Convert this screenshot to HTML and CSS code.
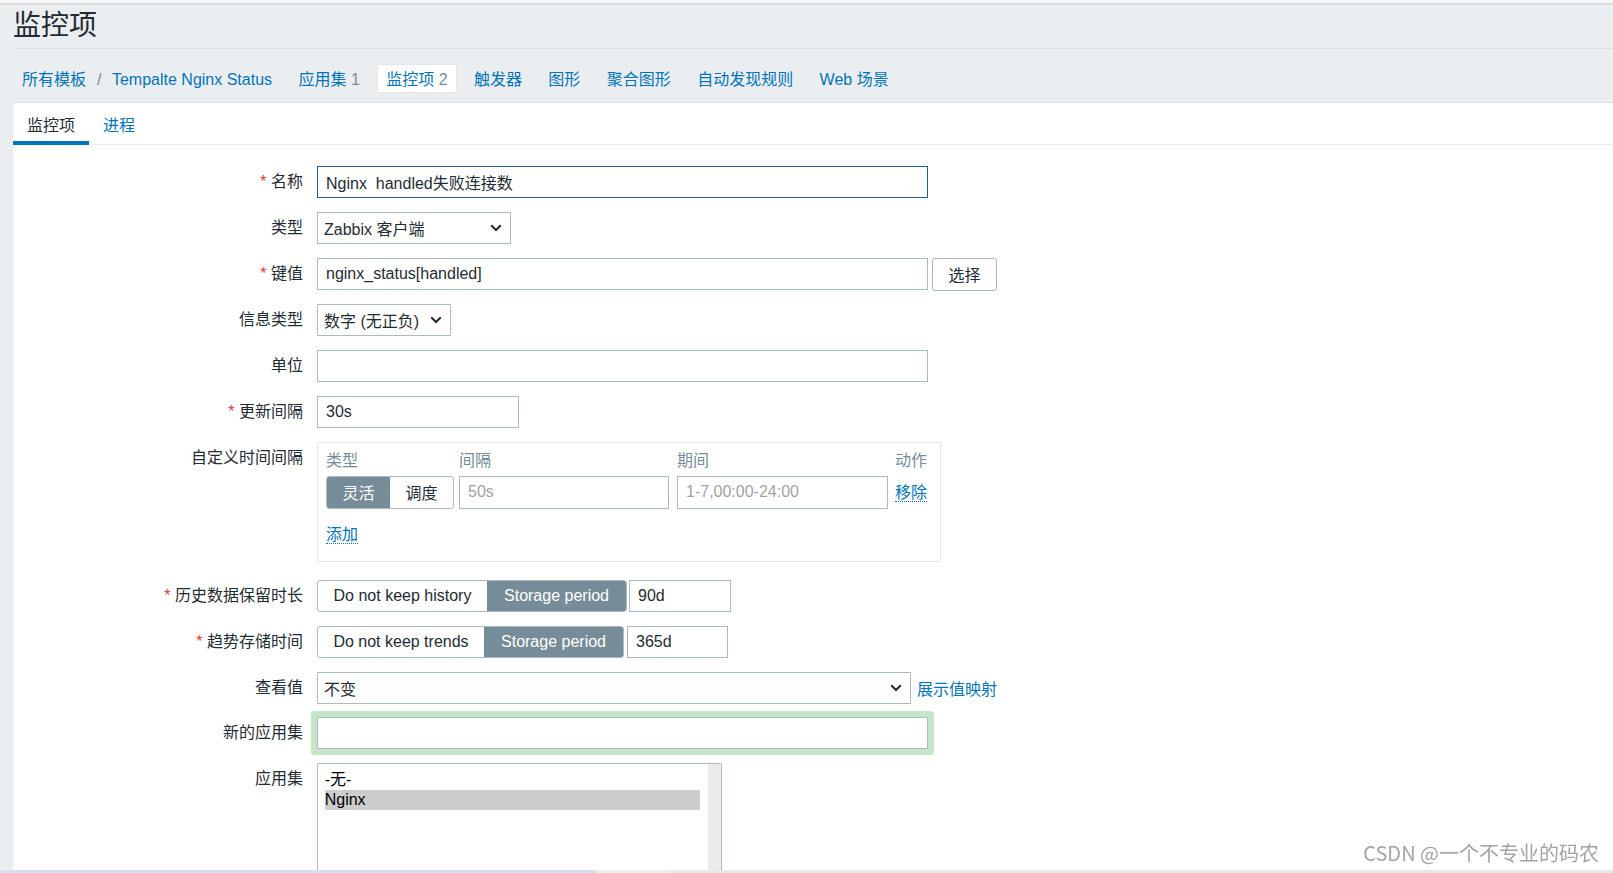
FILE: index.html
```html
<!DOCTYPE html>
<html lang="zh-CN">
<head>
<meta charset="utf-8">
<title>监控项</title>
<link rel="stylesheet" href="styles.css">
</head>
<body>
<div class="topbar"></div>
<header class="header">
  <h1 class="title">监控项</h1>
  <nav class="nav">
    <span class="nav-item"><a class="link">所有模板</a><span class="sep">/</span><a class="link">Tempalte Nginx Status</a></span>
    <a class="nav-item link">应用集 <span class="count">1</span></a>
    <span class="nav-item active"><a class="link">监控项</a> <span class="count">2</span></span>
    <a class="nav-item link">触发器</a>
    <a class="nav-item link">图形</a>
    <a class="nav-item link">聚合图形</a>
    <a class="nav-item link">自动发现规则</a>
    <a class="nav-item link">Web 场景</a>
  </nav>
</header>
<main class="panel">
  <div class="tabs">
    <span class="tab active">监控项</span>
    <span class="tab link">进程</span>
  </div>
  <form class="form">
    <label class="lbl"><span class="req">*</span> 名称</label>
    <div class="field"><input class="input w-611 focus" type="text" value="Nginx  handled失败连接数"></div>

    <label class="lbl">类型</label>
    <div class="field"><div class="select w-194"><span>Zabbix 客户端</span><svg class="chev" width="12" height="8" viewBox="0 0 12 8"><polyline points="1.2,1.2 6,6 10.8,1.2" fill="none" stroke="#1f2c33" stroke-width="2"/></svg></div></div>

    <label class="lbl"><span class="req">*</span> 键值</label>
    <div class="field row"><input class="input w-611" type="text" value="nginx_status[handled]"><button type="button" class="btn">选择</button></div>

    <label class="lbl">信息类型</label>
    <div class="field"><div class="select w-134"><span>数字 (无正负)</span><svg class="chev" width="12" height="8" viewBox="0 0 12 8"><polyline points="1.2,1.2 6,6 10.8,1.2" fill="none" stroke="#1f2c33" stroke-width="2"/></svg></div></div>

    <label class="lbl">单位</label>
    <div class="field"><input class="input w-611" type="text" value=""></div>

    <label class="lbl"><span class="req">*</span> 更新间隔</label>
    <div class="field"><input class="input w-202" type="text" value="30s"></div>

    <label class="lbl">自定义时间间隔</label>
    <div class="field">
      <div class="intervals">
        <div class="iv-grid">
          <span class="iv-head">类型</span>
          <span class="iv-head">间隔</span>
          <span class="iv-head">期间</span>
          <span class="iv-head">动作</span>
          <div class="seg seg-small"><span class="seg-opt on w-64">灵活</span><span class="seg-opt w-64">调度</span></div>
          <input class="input h-33 w-210 muted" type="text" value="50s">
          <input class="input h-33 w-211 muted" type="text" value="1-7,00:00-24:00">
          <span class="iv-action"><a class="link dotted">移除</a></span>
        </div>
        <div class="iv-add"><a class="link dotted">添加</a></div>
      </div>
    </div>

    <label class="lbl"><span class="req">*</span> 历史数据保留时长</label>
    <div class="field row gap-2">
      <div class="seg"><span class="seg-opt w-170">Do not keep history</span><span class="seg-opt on w-139">Storage period</span></div>
      <input class="input w-102" type="text" value="90d">
    </div>

    <label class="lbl"><span class="req">*</span> 趋势存储时间</label>
    <div class="field row gap-3">
      <div class="seg"><span class="seg-opt w-167">Do not keep trends</span><span class="seg-opt on w-139">Storage period</span></div>
      <input class="input w-101" type="text" value="365d">
    </div>

    <label class="lbl">查看值</label>
    <div class="field row gap-6">
      <div class="select w-594"><span>不变</span><svg class="chev" width="12" height="8" viewBox="0 0 12 8"><polyline points="1.2,1.2 6,6 10.8,1.2" fill="none" stroke="#1f2c33" stroke-width="2"/></svg></div>
      <a class="link">展示值映射</a>
    </div>

    <label class="lbl">新的应用集</label>
    <div class="field"><input class="input w-611 highlight" type="text" value=""></div>

    <label class="lbl">应用集</label>
    <div class="field">
      <div class="listbox">
        <div class="options">
          <div class="option">-无-</div>
          <div class="option selected">Nginx</div>
        </div>
        <div class="scrollbar"></div>
      </div>
    </div>
  </form>
</main>
<div class="watermark">CSDN @一个不专业的码农</div>
<div class="bottombar"></div>
</body>
</html>
```
FILE: styles.css
```css
* { box-sizing: border-box; }

html, body {
  margin: 0;
  height: 100%;
  overflow: hidden;
}

body {
  background: #ebeef0;
  font-family: "Liberation Sans", Arial, "Noto Sans CJK SC", sans-serif;
  font-size: 16px;
  color: #1f2c33;
  display: flex;
  flex-direction: column;
}

.topbar {
  flex: none;
  height: 5px;
  background: #f6f6f7;
  border-bottom: 2px solid #d8dbdf;
}

.header {
  flex: none;
  padding-left: 13px;
}

.title {
  margin: 0;
  height: 44px;
  line-height: 42px;
  font-size: 28px;
  font-weight: normal;
  color: #1f2c33;
  border-bottom: 1px solid #dde2e5;
}

.nav {
  display: flex;
  align-items: flex-start;
  gap: 8.4px;
  height: 54px;
  padding-top: 15px;
  border-bottom: 1px solid #dadfe3;
}

.link {
  color: #0275b8;
  text-decoration: none;
  cursor: pointer;
}

.nav-item {
  height: 29px;
  line-height: 25px;
  padding: 2px 8px 0;
  border: 1px solid transparent;
  border-radius: 2px;
  white-space: nowrap;
}

.nav-item.active {
  background: #fff;
  border-color: #e3e7ea;
}

.sep {
  color: #768d99;
  margin: 0 10.5px 0 11px;
}

.count { color: #768d99; }

.panel {
  flex: 1;
  margin-left: 13px;
  background: #fff;
}

.tabs {
  display: flex;
  align-items: flex-start;
  height: 42px;
  border-bottom: 1px solid #ebeef0;
}

.tab {
  height: 42px;
  padding: 8px 14px 0;
  line-height: 30px;
}

.tab.active {
  color: #1f2c33;
  border-bottom: 4px solid #0275b8;
}

.form {
  display: grid;
  grid-template-columns: 290px auto;
  column-gap: 14px;
  row-gap: 13.8px;
  align-items: start;
  justify-content: start;
  padding-top: 21px;
  margin: 0;
}

.lbl {
  text-align: right;
  line-height: 32px;
  white-space: nowrap;
}

.req {
  color: #e33734;
}

.field { min-height: 32px; }

.row {
  display: flex;
  align-items: center;
  gap: 4px;
}
.gap-2 { gap: 2px; }
.gap-3 { gap: 3px; }
.gap-6 { gap: 6px; }

.input {
  display: block;
  height: 32px;
  margin: 0;
  padding: 0 8px;
  border: 1px solid #acbbc2;
  border-radius: 0;
  background: #fff;
  font: inherit;
  font-size: 16px;
  color: #1f2c33;
  outline: none;
}

.input.focus { border-color: #1f5f95; }
.input.muted { color: #a3a3a3; }
.input.h-33 { height: 33px; }
.input.highlight {
  box-shadow: 0 0 0 6px #c7e5c9;
  border-radius: 1px;
}

.w-611 { width: 611px; }
.w-202 { width: 202px; }
.w-210 { width: 210px; }
.w-211 { width: 211px; }
.w-102 { width: 102px; }
.w-101 { width: 101px; }
.w-194 { width: 194px; }
.w-134 { width: 134px; }
.w-594 { width: 594px; }
.w-64 { width: 64px; }
.w-170 { width: 169px; }
.w-167 { width: 166px; }
.w-139 { width: 139px; }

.select {
  display: flex;
  align-items: center;
  justify-content: space-between;
  height: 32px;
  padding: 0 8px 0 6px;
  border: 1px solid #acbbc2;
  background: #fff;
  white-space: nowrap;
}

.chev { flex: none; }

.btn {
  height: 33px;
  width: 65px;
  margin: 0;
  padding: 0;
  border: 1px solid #acbbc2;
  border-radius: 3px;
  background: #fff;
  font: inherit;
  font-size: 16px;
  color: #1f2c33;
}

.intervals {
  width: 624px;
  height: 120px;
  margin-bottom: 4.4px;
  border: 1px solid #e6e9eb;
  padding: 6px 8px 0;
}

.iv-grid {
  display: grid;
  grid-template-columns: 133px 218px 218px auto;
  row-gap: 3px;
  align-items: center;
}

.iv-head {
  color: #768d99;
  line-height: 24px;
}

.iv-action { line-height: 33px; }

.dotted {
  border-bottom: 1px dotted #0275b8;
}

.iv-add {
  margin-top: 14.5px;
  line-height: 24px;
}

.seg {
  display: flex;
  height: 32px;
  border: 1px solid #acbbc2;
  border-radius: 3px;
  overflow: hidden;
  background: #fff;
}

.seg-small { height: 33px; width: 128px; }

.seg-opt {
  display: flex;
  align-items: center;
  justify-content: center;
  white-space: nowrap;
  color: #1f2c33;
}

.seg-opt.on {
  background: #768d99;
  color: #fff;
}

.listbox {
  display: flex;
  width: 405px;
  height: 130px;
  border: 1px solid #acbbc2;
  border-radius: 2px 2px 0 0;
}

.options {
  flex: 1;
  padding: 6px 8px 0 6.7px;
}

.option {
  line-height: 20px;
  height: 20px;
  color: #000;
  white-space: nowrap;
}

.option.selected { background: #cdcdcd; }

.scrollbar {
  width: 13px;
  background: #ebebeb;
}

.watermark {
  position: fixed;
  right: 14px;
  top: 838px;
  line-height: 30px;
  font-family: "Noto Sans CJK SC", sans-serif;
  font-size: 20px;
  color: #a4a4a4;
  white-space: nowrap;
}

.bottombar {
  position: fixed;
  left: 0;
  right: 0;
  bottom: 0;
  height: 3px;
  background: linear-gradient(to right, #d8e1ea 0, #d8e1ea 597px, #eef1f3 597px, #eef1f3 670px, #e4e8ec 670px);
}
```
